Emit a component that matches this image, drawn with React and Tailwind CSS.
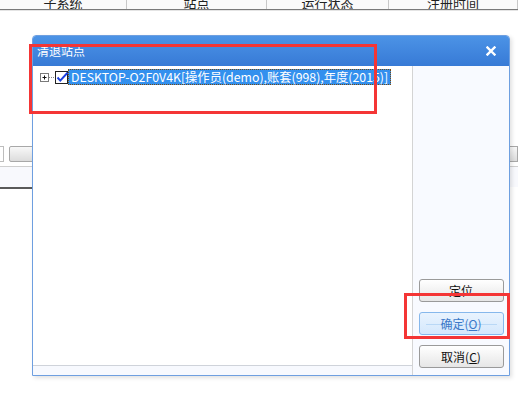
import React from 'react';

const font = "font-['Noto_Sans_CJK_SC','Noto_Sans',sans-serif]";

const HeaderCell = ({ w, label }) => (
  <div className={`${w} h-full flex items-end justify-center overflow-hidden border-r border-[#c8c8c8]`}>
    <span className="text-[13px] leading-[16px] text-[#222] -mb-[2px]">{label}</span>
  </div>
);

const Btn = ({ children, primary }) => (
  <button
    className={
      primary
        ? 'relative h-[23px] w-[85px] rounded-[3px] border border-[#86b8ec] bg-gradient-to-b from-[#e9f3fe] to-[#d4e8fc] text-[12px] text-[#3a78c8]'
        : 'h-[23px] w-[85px] rounded-[3px] border border-[#9a9a9a] bg-gradient-to-b from-[#ffffff] to-[#e6e6e6] text-[12px] text-[#111]'
    }
  >
    {primary && <span className="absolute left-[6px] right-[6px] top-[11px] h-px bg-[#b9d8f6]" />}
    <span className="relative">{children}</span>
  </button>
);

export default function App() {
  return (
    <div className={`relative w-[518px] h-[397px] bg-white overflow-hidden ${font}`}>
      {/* application behind the dialog */}
      <div className="flex h-[10px] bg-[#fafafa] border-b border-[#7a7a7a]">
        <HeaderCell w="w-[127px]" label="子系统" />
        <HeaderCell w="w-[140px]" label="站点" />
        <HeaderCell w="w-[122px]" label="运行状态" />
        <HeaderCell w="w-[129px]" label="注册时间" />
      </div>
      <div className="h-px bg-[#e4e4e4]" />

      <div className="mt-[135px] flex justify-between">
        <div className="flex h-[16px]">
          <div className="w-[4px] border border-l-0 border-[#bdbdbd] bg-white" />
          <div className="ml-[5px] w-[30px] rounded-[2px] border border-[#a8a8a8] bg-gradient-to-b from-[#f8f8f8] to-[#dcdcdc]" />
        </div>
        <div className="h-[16px] w-[12px] border border-[#a8a8a8] bg-gradient-to-b from-[#f8f8f8] to-[#dcdcdc]" />
      </div>
      <div className="mt-[4px] h-px bg-[#cfcfcf]" />
      <div className="h-[20px] bg-[#f8f9fd]" />
      <div className="h-[2px] w-[34px] bg-[#5a5a5a]" />

      {/* dialog window */}
      <div className="absolute left-[32px] top-[35px] w-[478px] h-[341px] rounded-t-[4px] border border-[#6e9fe0] shadow-[2px_2px_4px_rgba(0,0,0,0.12)] flex flex-col overflow-hidden">
        <div className="h-[30px] shrink-0 bg-gradient-to-b from-[#4c93e6] to-[#377ad6] flex items-center justify-between pl-[4px] pr-[13px]">
          <span className="text-[12px] text-white">清退站点</span>
          <svg width="10" height="10" viewBox="0 0 10 10">
            <path d="M1.5 1.5 L8.5 8.5 M8.5 1.5 L1.5 8.5" stroke="white" strokeWidth="2.4" strokeLinecap="square" />
          </svg>
        </div>
        <div className="flex flex-1">
          <div className="flex flex-col flex-1 min-w-0">
            <div className="flex-1 bg-white border-r border-[#d4d4d4] pt-[3px] pl-[7px]">
              <div className="flex items-center">
                <svg width="15" height="13" viewBox="0 0 15 13" className="shrink-0">
                  <rect x="0.5" y="2.5" width="8" height="8" fill="white" stroke="#7a7a7a" />
                  <path d="M2.5 6.5 H6.5 M4.5 4.5 V8.5" stroke="#111" />
                  <path d="M9 6.5 H15" stroke="#888" strokeDasharray="1 1" />
                </svg>
                <svg width="13" height="13" viewBox="0 0 13 13" className="shrink-0">
                  <rect x="0.5" y="0.5" width="12" height="12" fill="white" stroke="#222" />
                  <path d="M2.5 6.5 L5.3 9.6 L12.5 1.8" fill="none" stroke="#1a3ee0" strokeWidth="2" />
                </svg>
                <span className="shrink-0 h-[16px] px-[2px] bg-[#3390ee] border border-dotted border-[#7a4a10] text-[12.3px] leading-[14px] text-white whitespace-nowrap">
                  DESKTOP-O2F0V4K[操作员(demo),账套(998),年度(2015)]
                </span>
              </div>
            </div>
            <div className="h-[10px] shrink-0 bg-[#f7f9fe] border-t border-[#cfd3da] border-r border-r-[#d4d4d4]" />
          </div>
          <div className="w-[96px] shrink-0 bg-[#f8faff] flex flex-col justify-end items-center gap-[10px] pb-[7px]">
            <Btn>定位</Btn>
            <Btn primary>确定(<span className="underline">O</span>)</Btn>
            <Btn>取消(<span className="underline">C</span>)</Btn>
          </div>
        </div>
      </div>

      {/* red annotation boxes */}
      <div className="absolute left-[29px] top-[44px] w-[348px] h-[70px] border-[3px] border-[#f43535]" />
      <div className="absolute left-[404px] top-[293px] w-[106px] h-[46px] border-[3px] border-[#f43535]" />
    </div>
  );
}
